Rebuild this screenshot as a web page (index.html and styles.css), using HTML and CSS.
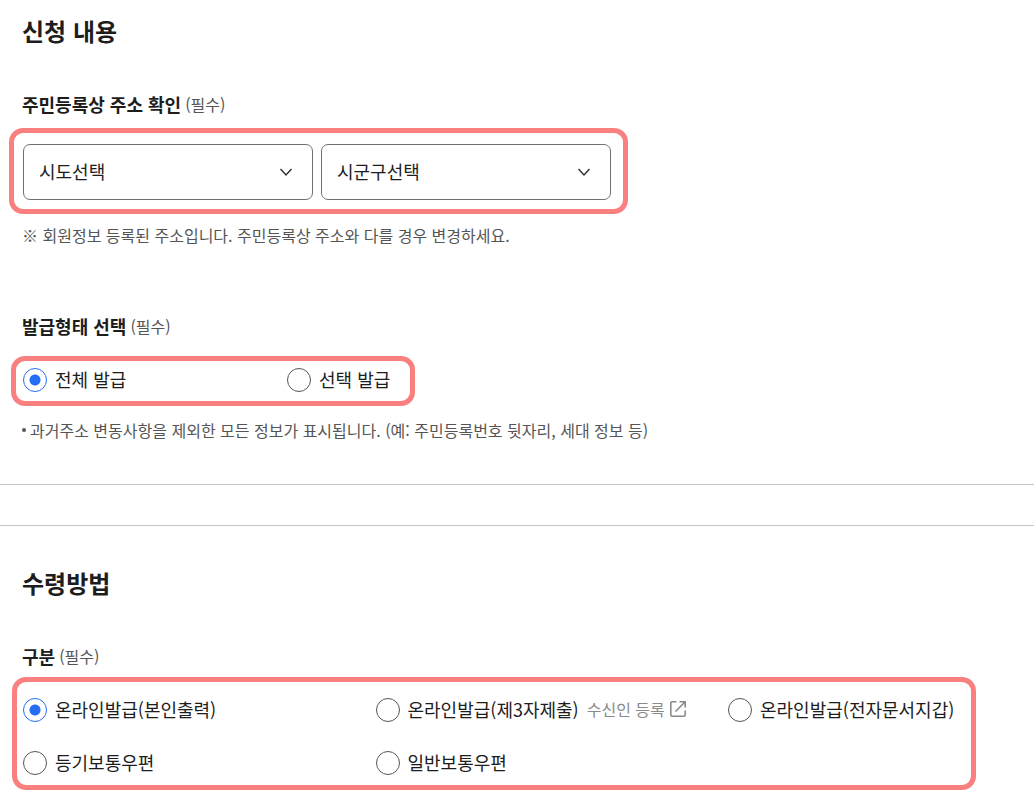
FILE: index.html
```html
<!DOCTYPE html>
<html lang="ko">
<head>
  <meta charset="UTF-8">
  <meta name="viewport" content="width=device-width, initial-scale=1">
  <title>신청 내용</title>
  <link rel="stylesheet" href="styles.css">
</head>
<body>

  <form>
    <section class="section section-apply">
      <h2>신청 내용</h2>

      <h3>주민등록상 주소 확인 <span class="required">(필수)</span></h3>
      <div class="frame address">
        <select name="sido" aria-label="시도선택">
          <option value="">시도선택</option>
        </select>
        <select name="sigungu" aria-label="시군구선택">
          <option value="">시군구선택</option>
        </select>
      </div>
      <p class="hint">※ 회원정보 등록된 주소입니다. 주민등록상 주소와 다를 경우 변경하세요.</p>

      <h3 class="next">발급형태 선택 <span class="required">(필수)</span></h3>
      <div class="frame issue">
        <label class="option"><input type="radio" name="issue" value="all" checked> 전체 발급</label>
        <label class="option"><input type="radio" name="issue" value="part"> 선택 발급</label>
      </div>
      <ul class="hint-list">
        <li>과거주소 변동사항을 제외한 모든 정보가 표시됩니다. (예: 주민등록번호 뒷자리, 세대 정보 등)</li>
      </ul>
    </section>

    <section class="section section-receive">
      <h2>수령방법</h2>

      <h3>구분 <span class="required">(필수)</span></h3>
      <div class="frame receive">
        <label class="option"><input type="radio" name="receive" value="self" checked> 온라인발급(본인출력)</label>
        <div class="option-row">
          <label class="option"><input type="radio" name="receive" value="third"> 온라인발급(제3자제출)</label>
          <a class="register" href="#">수신인 등록
            <svg width="18" height="18" viewBox="0 0 18 18" fill="none" stroke="currentColor" stroke-width="1.6">
              <path d="M7.5 1.8H3.2Q1.8 1.8 1.8 3.2V14.8Q1.8 16.2 3.2 16.2H14.8Q16.2 16.2 16.2 14.8V10.5"/>
              <path d="M10.5 1.8H16.2V7.5M16.2 1.8L6.5 11.5"/>
            </svg>
          </a>
        </div>
        <label class="option"><input type="radio" name="receive" value="wallet"> 온라인발급(전자문서지갑)</label>
        <label class="option"><input type="radio" name="receive" value="registered"> 등기보통우편</label>
        <label class="option"><input type="radio" name="receive" value="normal"> 일반보통우편</label>
      </div>
    </section>
  </form>

</body>
</html>
```

FILE: styles.css
```css
* {
  box-sizing: border-box;
}

body {
  margin: 0;
  background: #fff;
  color: #1d1d1d;
  font-family: "Noto Sans CJK KR", sans-serif;
  font-size: 18px;
  line-height: 28px;
}

.section {
  padding: 0 58px 0 22px;
}

.section-apply {
  padding-top: 13px;
  padding-bottom: 42px;
  border-bottom: 1px solid #c6c6c6;
}

.section-receive {
  margin-top: 40px;
  padding-top: 39px;
  padding-bottom: 16px;
  border-top: 1px solid #c6c6c6;
}

h2 {
  margin: 0 0 41px;
  font-size: 24px;
  line-height: 36px;
  font-weight: 700;
}

h3 {
  display: flex;
  align-items: center;
  gap: 4px;
  margin: 0;
  font-size: 18px;
  line-height: 28px;
  font-weight: 700;
}

h3.next {
  margin-top: 65px;
}

.required {
  font-size: 16px;
  font-weight: 400;
  color: #555;
}

/* red highlight box */
.frame {
  border: 5px solid #fa8080;
  border-radius: 14px;
}

.address {
  display: flex;
  gap: 8px;
  max-width: 619px;
  margin: 10px 0 9px -13px;
  padding: 11px 12px 9px 9px;
}

select {
  flex: 1;
  min-width: 0;
  height: 56px;
  padding: 0 15px 2px;
  border: 1px solid #717171;
  border-radius: 7px;
  appearance: none;
  background: #fff url("data:image/svg+xml,%3Csvg xmlns='http://www.w3.org/2000/svg' width='14' height='10' fill='none' stroke='%23333' stroke-width='1.5'%3E%3Cpath d='M1.5 2L7 8L12.5 2'/%3E%3C/svg%3E") no-repeat right 19px center;
  color: #1d1d1d;
  font-family: inherit;
  font-size: 18px;
}

.hint,
.hint-list {
  margin: 0;
  font-size: 16px;
  line-height: 24px;
  color: #555;
}

.hint-list {
  padding: 0;
  list-style: none;
}

.hint-list li {
  display: flex;
  align-items: center;
  gap: 4px;
}

.hint-list li::before {
  content: "";
  flex: none;
  width: 4px;
  height: 4px;
  border-radius: 50%;
  background: #555;
}

.issue {
  display: grid;
  grid-template-columns: 264px auto;
  width: fit-content;
  margin: 16px 0 12px -11px;
  padding: 4px 20px 8px 7px;
}

.receive {
  display: grid;
  grid-template-columns: 3fr 3fr 2fr;
  row-gap: 25px;
  margin: 7px 0 0 -10px;
  padding: 13px 8px 9px 6px;
}

.option {
  display: flex;
  align-items: center;
  gap: 8px;
  white-space: nowrap;
}

.option,
.option-row {
  min-height: 28px;
}

.option-row {
  display: flex;
  align-items: center;
  gap: 8px;
}

input[type="radio"] {
  appearance: none;
  flex: none;
  width: 24px;
  height: 24px;
  margin: 2px 0 0;
  border: 1px solid #555;
  border-radius: 50%;
  background: #fff;
}

input[type="radio"]:checked {
  border-color: #256ef4;
  background: radial-gradient(circle, #256ef4 5px, #fff 6px);
}

.register {
  display: flex;
  align-items: center;
  gap: 4px;
  font-size: 16px;
  color: #8a8a8a;
  text-decoration: none;
  white-space: nowrap;
}
```
